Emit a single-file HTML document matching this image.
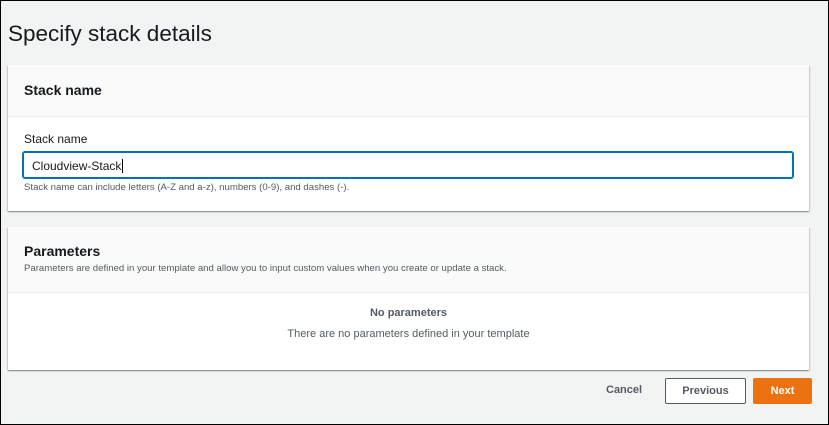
<!DOCTYPE html>
<html><head><style>
*{margin:0;padding:0;box-sizing:border-box}
body{width:829px;height:425px;background:#f2f3f3;font-family:"Liberation Sans",sans-serif;position:relative;overflow:hidden;color:#16191f}
.a{position:absolute}
h1{position:absolute;left:8px;top:21px;font-size:22.5px;font-weight:normal;color:#16191f}
.panel{position:absolute;left:8px;width:801px;background:#fff;box-shadow:0 1px 1px rgba(0,28,36,.3),1px 1px 1px rgba(0,28,36,.15),-1px 1px 1px rgba(0,28,36,.15)}
.hdr{background:#fafafa;border-bottom:1px solid #eaeded;position:absolute;left:0;right:0;top:0}
.frame{position:absolute;left:0;top:0;width:829px;height:425px;border:1px solid #000;pointer-events:none}
</style></head><body>
<h1>Specify stack details</h1>
<div class="panel" style="top:65px;height:146px">
 <div class="hdr" style="height:52px"><div class="a" style="left:16px;top:17px;font-size:14px;font-weight:bold">Stack name</div></div>
 <div class="a" style="left:16px;top:67px;font-size:12px;color:#16191f">Stack name</div>
 <div class="a" style="left:15px;top:87px;width:770px;height:26px;border:1px solid #0073bb;box-shadow:0 0 0 1px #0073bb;border-radius:2px;font-size:12px;padding:6px 8px">Cloudview-Stack<span style="border-left:1px solid #000;margin-left:1px"></span></div>
 <div class="a" style="left:16px;top:117px;font-size:9.6px;color:#545b64">Stack name can include letters (A-Z and a-z), numbers (0-9), and dashes (-).</div>
</div>
<div class="panel" style="top:227px;height:143px">
 <div class="hdr" style="height:66px">
  <div class="a" style="left:16px;top:16px;font-size:14px;font-weight:bold">Parameters</div>
  <div class="a" style="left:16px;top:36px;font-size:9.6px;color:#545b64">Parameters are defined in your template and allow you to input custom values when you create or update a stack.</div>
 </div>
 <div class="a" style="left:0;right:0;top:80px;text-align:center;font-size:11px;font-weight:bold;color:#545b64">No parameters</div>
 <div class="a" style="left:0;right:0;top:101px;text-align:center;font-size:11px;color:#545b64">There are no parameters defined in your template</div>
</div>
<div class="a" style="left:606px;top:384px;font-size:11px;font-weight:bold;color:#545b64">Cancel</div>
<div class="a" style="left:665px;top:378px;width:81px;height:26px;border:1px solid #545b64;background:#fff;font-size:11px;font-weight:bold;color:#545b64;text-align:center;line-height:24px;border-radius:2px">Previous</div>
<div class="a" style="left:753px;top:378px;width:59px;height:26px;background:#ec7211;font-size:11px;font-weight:bold;color:#fff;text-align:center;line-height:26px;border-radius:2px">Next</div>
<div class="frame"></div>
</body></html>
